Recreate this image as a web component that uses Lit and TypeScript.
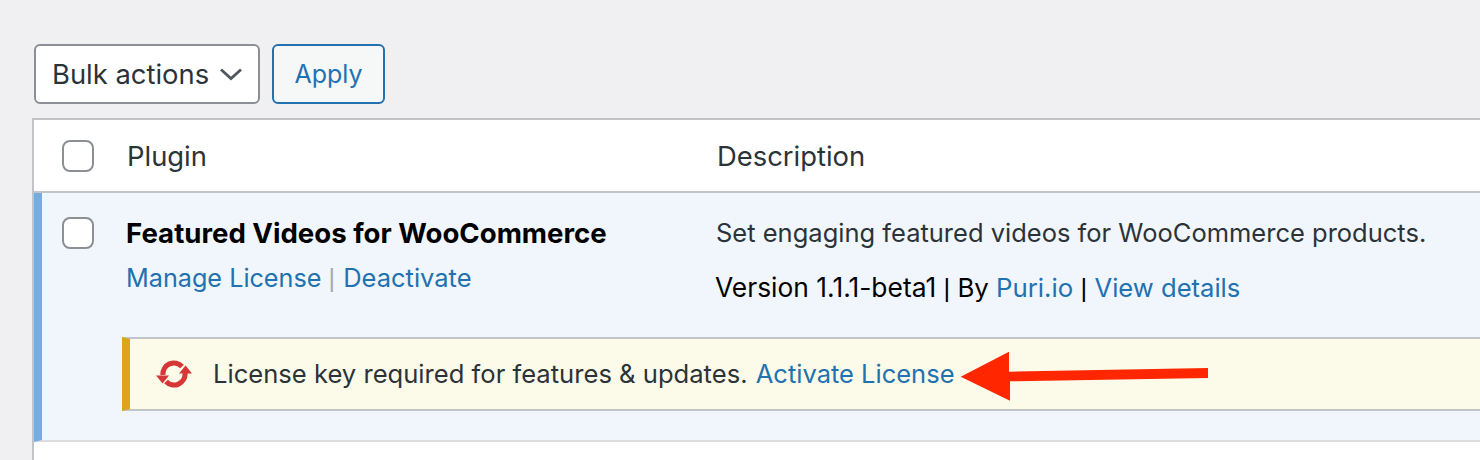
import { LitElement, html, css } from "lit";
import { customElement } from "lit/decorators.js";

@customElement("app-root")
export class AppRoot extends LitElement {
  static styles = css`
    :host {
      display: block;
      position: relative;
      width: 1480px;
      height: 460px;
      overflow: hidden;
      background: #f0f0f2;
      font-family: Inter, "Liberation Sans", sans-serif;
      font-size: 25.5px;
      color: #2c3338;
    }
    a { color: #2271b1; text-decoration: none; }
    .page { display: flex; flex-direction: column; padding: 44px 0 0 32px; width: 1700px; }
    .toolbar { display: flex; gap: 12px; padding-left: 2px; height: 60px; margin-bottom: 14px; }
    .select {
      width: 226px; box-sizing: border-box; height: 60px;
      display: flex; align-items: center; justify-content: space-between;
      padding: 0 15px 0 16px; font-size: 27.4px;
      background: #fff; border: 2px solid #8c8f94; border-radius: 6px;
    }
    .select svg { display: block; }
    .apply {
      width: 113px; box-sizing: border-box; height: 60px;
      display: flex; align-items: center; justify-content: center; font-size: 25px;
      background: #f6f7f7; border: 2px solid #2271b1; border-radius: 6px; color: #2271b1;
    }
    .table { border: 2px solid #c3c4c7; border-bottom: none; background: #fff; height: 400px; }
    .head {
      display: grid; grid-template-columns: 94px 590px 1fr; align-items: center;
      height: 71px; border-bottom: 2px solid #c3c4c7; font-size: 27.4px;
    }
    .head .col { margin-left: -1px; }
    .check {
      width: 32px; height: 32px; box-sizing: border-box; margin-left: 28px;
      background: #fff; border: 2px solid #8c8f94; border-radius: 8px;
    }
    .row {
      background: #f0f6fb; border-left: 8px solid #72aee6; border-bottom: 2px solid #dcdcde;
      height: 249px; box-sizing: border-box; display: flex; flex-direction: column;
    }
    .cols { display: grid; grid-template-columns: 85px 589px 1fr; height: 144px; padding-top: 24px; box-sizing: border-box; }
    .row .check { margin-left: 20px; }
    .plugin { margin-left: -1px; }
    .name { font-weight: 700; font-size: 27.6px; color: #000; line-height: 32px; margin-bottom: 13px; }
    .actions { line-height: 32px; color: #a7aaad; font-size: 25.2px; }
    .deactivate { font-size: 25.5px; margin-left: 1px; }
    .sep { font-family: "Liberation Sans", sans-serif; }
    .desc { line-height: 32px; margin-bottom: 22px; }
    .meta { line-height: 32px; color: #000; font-size: 25.8px; margin-left: -1px; }
    .version { font-size: 26.4px; }
    .details { font-size: 25.6px; }
    .notice {
      margin-left: 80px; height: 74px; box-sizing: border-box;
      display: flex; align-items: center; padding-bottom: 1px;
      background: #fcfae8; border-top: 2px solid #c3c4c7; border-bottom: 2px solid #c3c4c7;
      border-left: 8px solid #dba617; padding-left: 25px;
    }
    .notice svg { display: block; margin-right: 20px; }
    .notice-text { font-size: 25.6px; }
    .activate { margin-left: 1px; font-size: 25.5px; }
    .arrow { position: absolute; left: 958px; top: 350px; }
  `;

  render() {
    return html`
      <div class="page">
        <div class="toolbar">
          <div class="select">
            <span>Bulk actions</span>
            <svg width="24" height="14" viewBox="0 0 24 14"><path d="M2 2.5 L12 11.5 L22 2.5" fill="none" stroke="#50575e" stroke-width="2.8"/></svg>
          </div>
          <div class="apply">Apply</div>
        </div>
        <div class="table">
          <div class="head">
            <div class="check"></div>
            <div class="col">Plugin</div>
            <div class="col">Description</div>
          </div>
          <div class="row">
            <div class="cols">
              <div class="check"></div>
              <div class="plugin">
                <div class="name">Featured Videos for WooCommerce</div>
                <div class="actions"><a href="#">Manage License</a> <span class="sep">|</span> <a class="deactivate" href="#">Deactivate</a></div>
              </div>
              <div>
                <div class="desc">Set engaging featured videos for WooCommerce products.</div>
                <div class="meta"><span class="version">Version 1.1.1-beta1</span> <span class="sep">|</span> By <a href="#">Puri.io</a> <span class="sep">|</span> <a class="details" href="#">View details</a></div>
              </div>
            </div>
            <div class="notice">
              <svg width="38" height="28" viewBox="0 0 38 28">
                <g fill="none" stroke="#d63638" stroke-width="5.2">
                  <path d="M8 15 A11 11 0 0 1 27 6.500"/>
                  <path d="M30 13 A11 11 0 0 1 11 21.500"/>
                </g>
                <path d="M1 15.500 L14 15.500 L7.500 23.500 Z" fill="#d63638"/>
                <path d="M37 13.500 L24 13.500 L30.500 5.500 Z" fill="#d63638"/>
              </svg>
              <span class="notice-text">License key required for features &amp; updates.&nbsp;<a class="activate" href="#">Activate License</a></span>
            </div>
          </div>
        </div>
      </div>
      <svg class="arrow" width="256" height="54" viewBox="0 0 256 54">
        <path d="M2.700 26.700 L51 1.700 L51 21.700 L250 18 L250 28 L52 31.300 L52 50.700 Z" fill="#ff2600"/>
      </svg>
    `;
  }
}
